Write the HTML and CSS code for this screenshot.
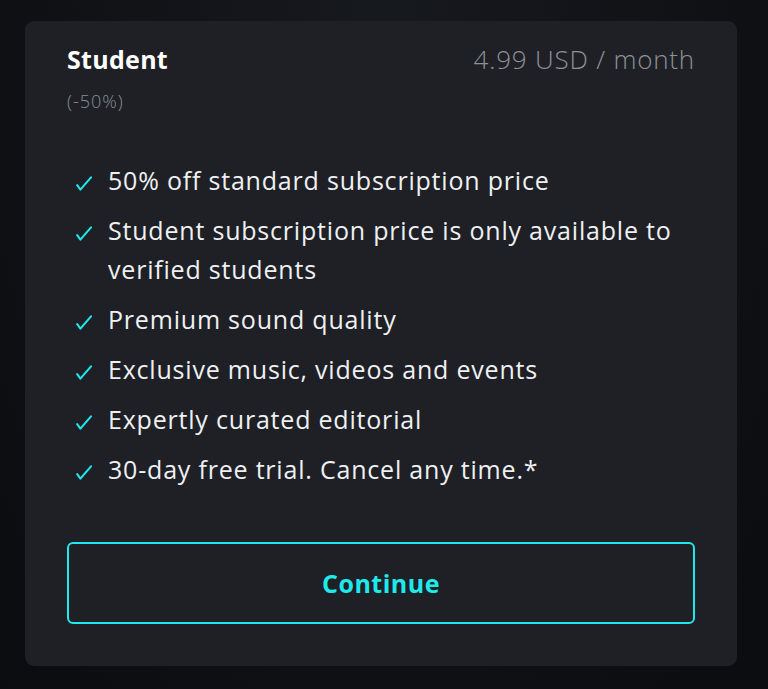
FILE: index.html
```html
<!DOCTYPE html>
<html>
<head>
<meta charset="utf-8">
<link rel="stylesheet" href="styles.css">
</head>
<body>
<div class="page">
  <div class="card">
    <div class="head">
      <div class="title">Student</div>
      <div class="price">4.99 USD / month</div>
    </div>
    <div class="discount">(-50%)</div>
    <ul class="features">
      <li><svg class="check" viewBox="0 0 16 15" width="16" height="15"><path d="M1.2 9.2 L4.4 13.6 L15 1.4" fill="none" stroke="#1fe6ea" stroke-width="2.1" stroke-linecap="round" stroke-linejoin="round"/></svg><span>50% off standard subscription price</span></li>
      <li><svg class="check" viewBox="0 0 16 15" width="16" height="15"><path d="M1.2 9.2 L4.4 13.6 L15 1.4" fill="none" stroke="#1fe6ea" stroke-width="2.1" stroke-linecap="round" stroke-linejoin="round"/></svg><span>Student subscription price is only available to verified students</span></li>
      <li><svg class="check" viewBox="0 0 16 15" width="16" height="15"><path d="M1.2 9.2 L4.4 13.6 L15 1.4" fill="none" stroke="#1fe6ea" stroke-width="2.1" stroke-linecap="round" stroke-linejoin="round"/></svg><span>Premium sound quality</span></li>
      <li><svg class="check" viewBox="0 0 16 15" width="16" height="15"><path d="M1.2 9.2 L4.4 13.6 L15 1.4" fill="none" stroke="#1fe6ea" stroke-width="2.1" stroke-linecap="round" stroke-linejoin="round"/></svg><span>Exclusive music, videos and events</span></li>
      <li><svg class="check" viewBox="0 0 16 15" width="16" height="15"><path d="M1.2 9.2 L4.4 13.6 L15 1.4" fill="none" stroke="#1fe6ea" stroke-width="2.1" stroke-linecap="round" stroke-linejoin="round"/></svg><span>Expertly curated editorial</span></li>
      <li><svg class="check" viewBox="0 0 16 15" width="16" height="15"><path d="M1.2 9.2 L4.4 13.6 L15 1.4" fill="none" stroke="#1fe6ea" stroke-width="2.1" stroke-linecap="round" stroke-linejoin="round"/></svg><span>30-day free trial. Cancel any time.*</span></li>
    </ul>
    <button class="continue">Continue</button>
  </div>
</div>
</body>
</html>
```

FILE: styles.css
```css
html, body {
  margin: 0;
  padding: 0;
}
body {
  width: 768px;
  height: 689px;
  overflow: hidden;
  background: radial-gradient(ellipse at 50% 0%, #16191e 0%, #0f1115 60%, #0a0c0f 100%);
  font-family: "Open Sans", Lato, sans-serif;
}
.page {
  padding: 21px 31px 0 25px;
}
.card {
  background: #1e2026;
  border-radius: 9px;
  height: 645px;
  box-sizing: border-box;
  padding: 21px 42px 0 42px;
}
.head {
  display: flex;
  justify-content: space-between;
  align-items: baseline;
  height: 34px;
}
.title {
  color: #ffffff;
  font-weight: 700;
  font-size: 25px;
  line-height: 34px;
  letter-spacing: 0.3px;
}
.price {
  color: #8d9096;
  font-size: 26px;
  line-height: 34px;
  font-weight: 300;
  letter-spacing: 0.8px;
}
.discount {
  color: #8a8d93;
  font-size: 18px;
  line-height: 24px;
  font-weight: 300;
  letter-spacing: 1px;
  margin-top: 13px;
}
.features {
  list-style: none;
  margin: 48px 0 0 0;
  padding: 0;
  display: flex;
  flex-direction: column;
  gap: 11px;
}
.features li {
  display: flex;
  align-items: flex-start;
  color: #eef0f2;
  font-size: 25px;
  line-height: 39px;
  letter-spacing: 0.8px;
}
.check {
  flex: none;
  margin: 15px 16px 0 9px;
}
.continue {
  display: block;
  width: 100%;
  height: 82px;
  margin-top: 53px;
  background: transparent;
  border: 2px solid #1ee9eb;
  border-radius: 6px;
  color: #1ee9eb;
  font-family: "Open Sans", Lato, sans-serif;
  font-weight: 700;
  font-size: 25px;
  letter-spacing: 0.5px;
}
```
